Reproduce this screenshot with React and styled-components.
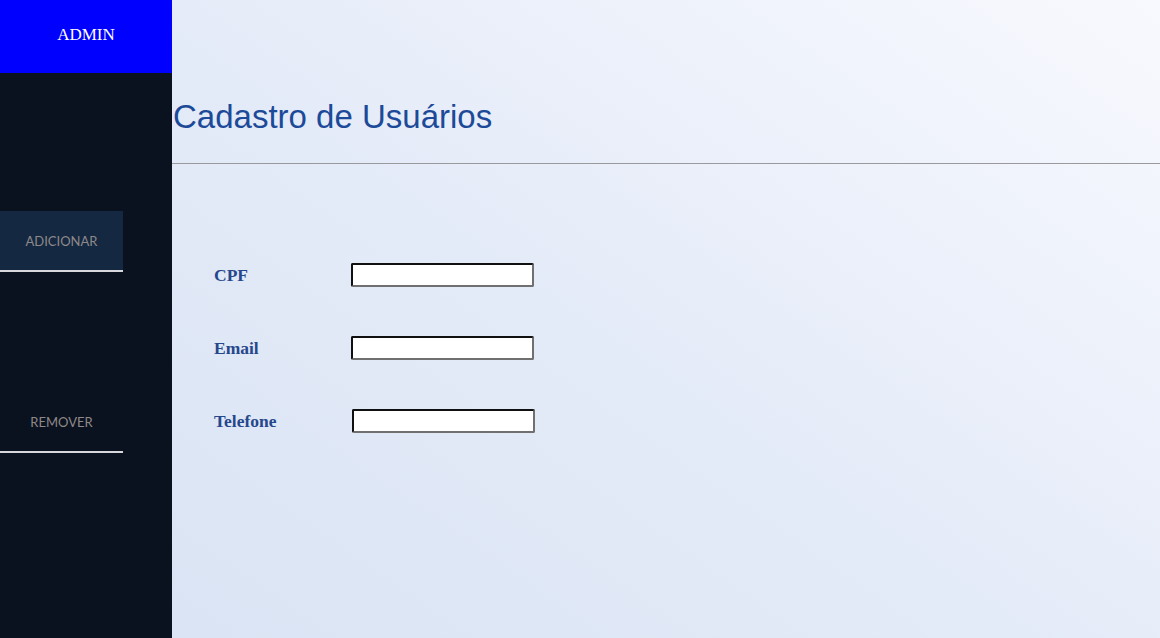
import styled, { createGlobalStyle } from 'styled-components';

const GlobalStyle = createGlobalStyle`
  html, body {
    margin: 0;
    padding: 0;
    height: 100%;
  }
  #root {
    height: 100%;
  }
`;

const Layout = styled.div`
  display: grid;
  grid-template-columns: 172px 1fr;
  height: 638px;
  overflow: hidden;
`;

const Sidebar = styled.aside`
  background-color: #0a1220;
  display: flex;
  flex-direction: column;
`;

const Brand = styled.div`
  height: 73px;
  box-sizing: border-box;
  padding-bottom: 4px;
  background-color: #0000ff;
  color: #fff;
  font-family: "Liberation Serif", serif;
  font-size: 17px;
  display: flex;
  align-items: center;
  justify-content: center;
`;

const Menu = styled.nav`
  display: flex;
  flex-direction: column;
  gap: 120px;
  margin-top: 138px;
`;

const MenuItem = styled.a`
  width: 123px;
  height: 59px;
  display: flex;
  align-items: center;
  justify-content: center;
  background-color: ${(p) => (p.active ? '#142842' : 'transparent')};
  border-bottom: 2px solid #d8d8dc;
  color: #8e8888;
  font-family: Lato, "Open Sans", sans-serif;
  font-size: 13px;
  text-transform: uppercase;
  text-decoration: none;
  cursor: pointer;
`;

const Main = styled.main`
  background: linear-gradient(35deg, #dae4f4 0%, #e4ebf8 45%, #f8f9fe 100%);
  display: flex;
  flex-direction: column;
`;

const Header = styled.header`
  height: 164px;
  border-bottom: 1px solid #9a9a9e;
  box-sizing: border-box;
  display: flex;
  align-items: flex-end;
  padding-bottom: 26px;
`;

const Title = styled.h1`
  margin: 0 0 0 1px;
  font-family: "Liberation Sans", Arial, sans-serif;
  font-weight: 400;
  font-size: 33px;
  line-height: 40px;
  color: #1c4a98;
`;

const Form = styled.form`
  display: flex;
  flex-direction: column;
  gap: 49px;
  padding: 99px 0 0 42px;
`;

const Row = styled.div`
  display: flex;
  align-items: center;
  height: 24px;
`;

const Label = styled.label`
  width: ${(p) => 137 + (p.shift || 0)}px;
  font-family: "Liberation Serif", serif;
  font-weight: 700;
  font-size: 17.5px;
  color: #26478c;
`;

const Input = styled.input`
  box-sizing: border-box;
  width: 183px;
  height: 24px;
  padding: 0 4px;
  background: #fff;
  border: 2px solid;
  border-color: #101010 #707070 #707070 #101010;
  border-radius: 2px;
  outline: none;
`;

const fields = [
  { id: 'cpf', label: 'CPF' },
  { id: 'email', label: 'Email' },
  { id: 'telefone', label: 'Telefone', shift: 1 },
];

export default function App() {
  return (
    <>
      <GlobalStyle />
      <Layout>
        <Sidebar>
          <Brand>ADMIN</Brand>
          <Menu>
            <MenuItem active>Adicionar</MenuItem>
            <MenuItem>Remover</MenuItem>
          </Menu>
        </Sidebar>
        <Main>
          <Header>
            <Title>Cadastro de Usuários</Title>
          </Header>
          <Form>
            {fields.map((f) => (
              <Row key={f.id}>
                <Label htmlFor={f.id} shift={f.shift}>
                  {f.label}
                </Label>
                <Input id={f.id} type="text" />
              </Row>
            ))}
          </Form>
        </Main>
      </Layout>
    </>
  );
}
